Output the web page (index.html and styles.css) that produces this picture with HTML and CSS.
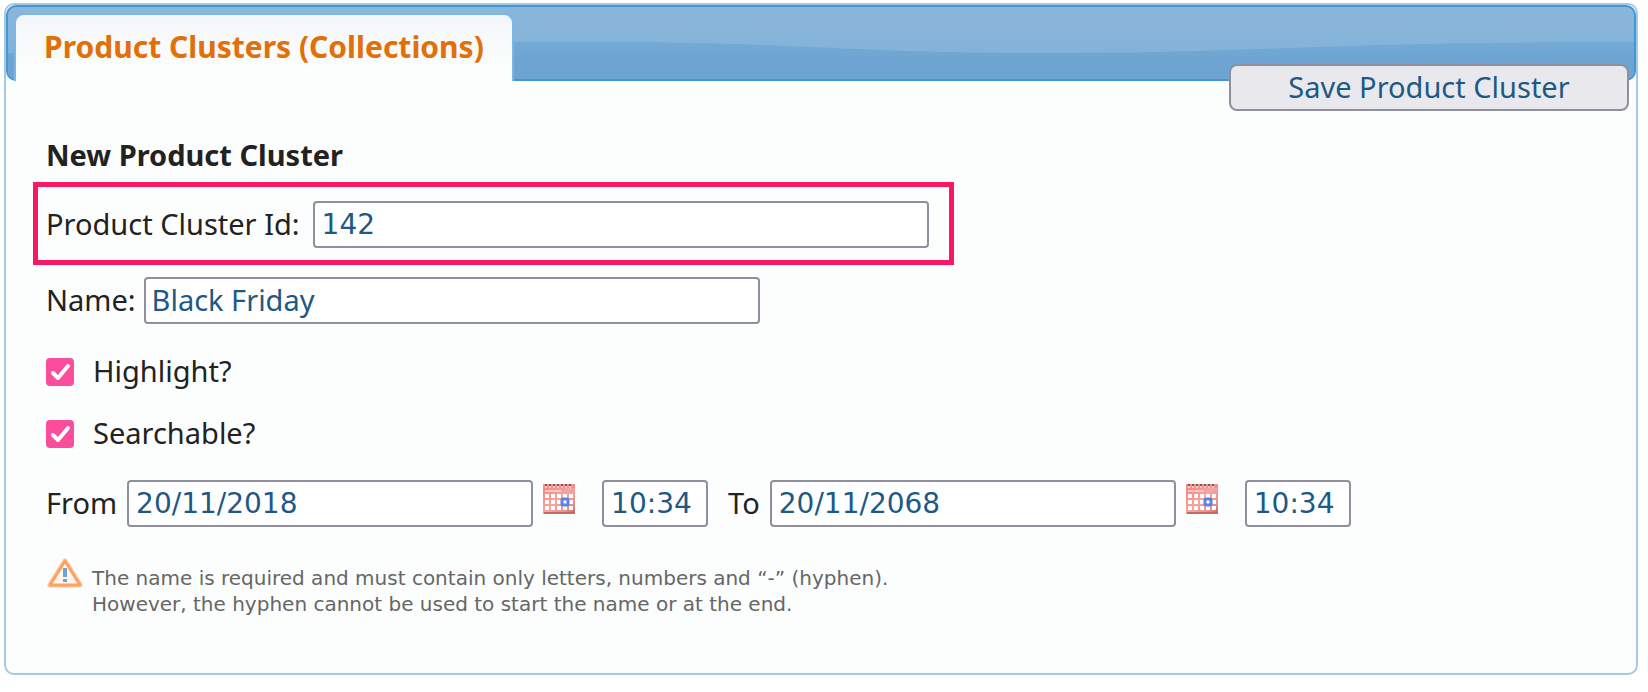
FILE: index.html
```html
<!DOCTYPE html>
<html lang="en">
<head>
<meta charset="utf-8">
<title>Product Clusters (Collections)</title>
<link rel="stylesheet" href="styles.css">
</head>
<body>
<svg class="sprite" aria-hidden="true">
  <defs>
    <linearGradient id="cal-red" x1="0" y1="0" x2="1" y2="1">
      <stop offset="0" stop-color="#fb7f7a"/>
      <stop offset="0.5" stop-color="#f6a5a0"/>
      <stop offset="0.8" stop-color="#e8918b"/>
      <stop offset="1" stop-color="#bd645e"/>
    </linearGradient>
    <symbol id="calendar" viewBox="0 0 32 30">
      <rect width="32" height="30" fill="url(#cal-red)"/>
      <rect width="32" height="4" fill="#f3908a"/>
      <path d="M2 1H29" stroke="#75585a" stroke-width="2" stroke-dasharray="2 2"/>
      <path d="M2 3H29" stroke="#f8cdc9" stroke-width="2" stroke-dasharray="2 2"/>
      <path d="M2 7H18" stroke="#ffc4bf" stroke-width="2"/>
      <path d="M2 12H30M2 18H30M2 24H30" stroke="#fff" stroke-width="4" stroke-dasharray="4 2"/>
      <rect x="19" y="15" width="6" height="6" rx="1" fill="#fff" stroke="#5b82e6" stroke-width="3"/>
      <path d="M1 29H32" stroke="#c26a63" stroke-width="2"/>
    </symbol>
  </defs>
</svg>
<main class="panel">
  <nav class="tabs">
    <svg class="wave" viewBox="0 0 1626 72" preserveAspectRatio="none" aria-hidden="true">
      <defs>
        <linearGradient id="wave-fill" x1="0" y1="0" x2="0" y2="1">
          <stop offset="0" stop-color="#73abd4"/>
          <stop offset="0.500" stop-color="#6da4d2"/>
          <stop offset="1" stop-color="#6ea4d2"/>
        </linearGradient>
      </defs>
      <path d="M0 46C8 47 14 45 20 44C100 38 300 36 505 35C800 33 820 46 1040 46C1260 46 1300 35 1626 35V72H0Z" fill="url(#wave-fill)"/>
    </svg>
    <a class="tab" href="#cluster">Product Clusters (Collections)</a>
  </nav>
  <form class="form" id="cluster">
    <button class="save" type="button">Save Product Cluster</button>
    <h1 class="title">New Product Cluster</h1>
    <div class="row row-marked">
      <label for="cluster-id">Product Cluster Id:</label>
      <input class="field field-long field-number" id="cluster-id" type="text" value="142">
    </div>
    <div class="row">
      <label for="name">Name:</label>
      <input class="field field-long" id="name" type="text" value="Black Friday">
    </div>
    <div class="row row-check">
      <input class="check" id="highlight" type="checkbox" checked>
      <label for="highlight">Highlight?</label>
    </div>
    <div class="row row-check">
      <input class="check" id="searchable" type="checkbox" checked>
      <label for="searchable">Searchable?</label>
    </div>
    <div class="row row-dates">
      <label for="from">From</label>
      <input class="field field-date field-number" id="from" type="text" value="20/11/2018">
      <button class="picker" type="button" aria-label="Pick start date"><svg width="32" height="30"><use href="#calendar"/></svg></button>
      <input class="field field-time field-number" type="text" value="10:34" aria-label="Start time">
      <label class="label-to" for="to">To</label>
      <input class="field field-date field-number" id="to" type="text" value="20/11/2068">
      <button class="picker" type="button" aria-label="Pick end date"><svg width="32" height="30"><use href="#calendar"/></svg></button>
      <input class="field field-time field-number" type="text" value="10:34" aria-label="End time">
    </div>
    <div class="note">
      <svg class="warning" width="36" height="32" viewBox="0 0 36 32" aria-hidden="true">
        <path d="M18 4L33 28H3Z" fill="#fff" stroke="#ffc9a6" stroke-width="5" stroke-linejoin="round"/>
        <path d="M18 4L33 28H3Z" fill="#fff6ef" stroke="#ffa065" stroke-width="3" stroke-linejoin="round"/>
        <path d="M18 11V20M18 22V25" stroke="#6fa3cf" stroke-width="4"/>
      </svg>
      <p class="note-text">The name is required and must contain only letters, numbers and “-” (hyphen).<br>However, the hyphen cannot be used to start the name or at the end.</p>
    </div>
  </form>
</main>
</body>
</html>
```

FILE: styles.css
```css
* {
  box-sizing: border-box;
}

body {
  margin: 0;
  padding: 3px 10px 14px 4px;
  background: #fff;
  color: #222;
  font-family: "Noto Sans", "Open Sans", sans-serif;
  font-size: 29px;
  line-height: 40px;
}

.sprite {
  position: absolute;
  width: 0;
  height: 0;
}

.panel {
  border: 2px solid #a6c9e2;
  border-radius: 10px;
  background: #fcfdfd;
}

.tabs {
  position: relative;
  display: flex;
  padding: 6px 6px 0;
  border: 2px solid #4297d7;
  border-radius: 10px;
  background: linear-gradient(#8bb6d9, #84b3d9 60%);
}

.wave {
  position: absolute;
  inset: 0;
  width: 100%;
  height: 100%;
  border-radius: 8px;
}

.tab {
  position: relative;
  margin-bottom: -2px;
  padding: 12px 28px 14px;
  border: 2px solid #79b7e7;
  border-bottom: 0;
  border-radius: 10px 10px 0 0;
  background: linear-gradient(#f3f6f8, #fcfdfd 80%);
  color: #e17009;
  font-size: 30px;
  font-weight: bold;
  text-decoration: none;
}

.form {
  display: flex;
  flex-direction: column;
  align-items: flex-start;
  padding: 0 7px 56px 27px;
}

.save {
  z-index: 1;
  align-self: flex-end;
  width: 400px;
  height: 47px;
  margin-top: -17px;
  padding: 0 0 2px;
  border: 2px solid #8f8f9d;
  border-radius: 8px;
  background: #e9e9ed;
  color: #1d5987;
  font: inherit;
}

.title {
  margin: 24px 0 7px 13px;
  font-size: 29px;
  line-height: 40px;
}

.row {
  display: flex;
  align-items: center;
  gap: 8px;
  margin: 12px 0 0 13px;
}

.row label {
  padding-bottom: 2px;
}

.row-marked {
  gap: 13px;
  margin: 0;
  padding: 14px 20px 12px 8px;
  border: 5px solid #fa1763;
}

.field {
  height: 47px;
  padding: 0 6px 2px;
  border: 2px solid #8f8f9d;
  border-radius: 4px;
  background: #fff;
  color: #1d5987;
  font: inherit;
}

.field-number {
  padding: 0 7px;
  font-family: "DejaVu Sans", Verdana, sans-serif;
  font-size: 28px;
}

.field-long {
  width: 616px;
}

.field-date {
  width: 406px;
}

.field-time {
  width: 106px;
  margin-left: 17px;
}

.row-check {
  gap: 19px;
  height: 28px;
  margin-top: 34px;
}

.check {
  appearance: none;
  width: 28px;
  height: 28px;
  margin: 0;
  border-radius: 4px;
  background: #fb4d9d url("data:image/svg+xml,%3Csvg xmlns='http://www.w3.org/2000/svg' viewBox='0 0 28 28'%3E%3Cpath d='M7 15l5 5L22 8' fill='none' stroke='white' stroke-width='4' stroke-linecap='round' stroke-linejoin='round'/%3E%3C/svg%3E");
}

.row-dates {
  gap: 10px;
  margin-top: 32px;
}

.label-to {
  margin-left: 10px;
}

.picker {
  display: flex;
  padding: 0 0 9px;
  border: 0;
  background: none;
}

.note {
  display: flex;
  gap: 9px;
  margin: 30px 0 0 14px;
}

.note-text {
  margin: 8px 0 0;
  color: #666;
  font-family: "DejaVu Sans", Verdana, sans-serif;
  font-size: 20px;
  line-height: 26px;
}
```
